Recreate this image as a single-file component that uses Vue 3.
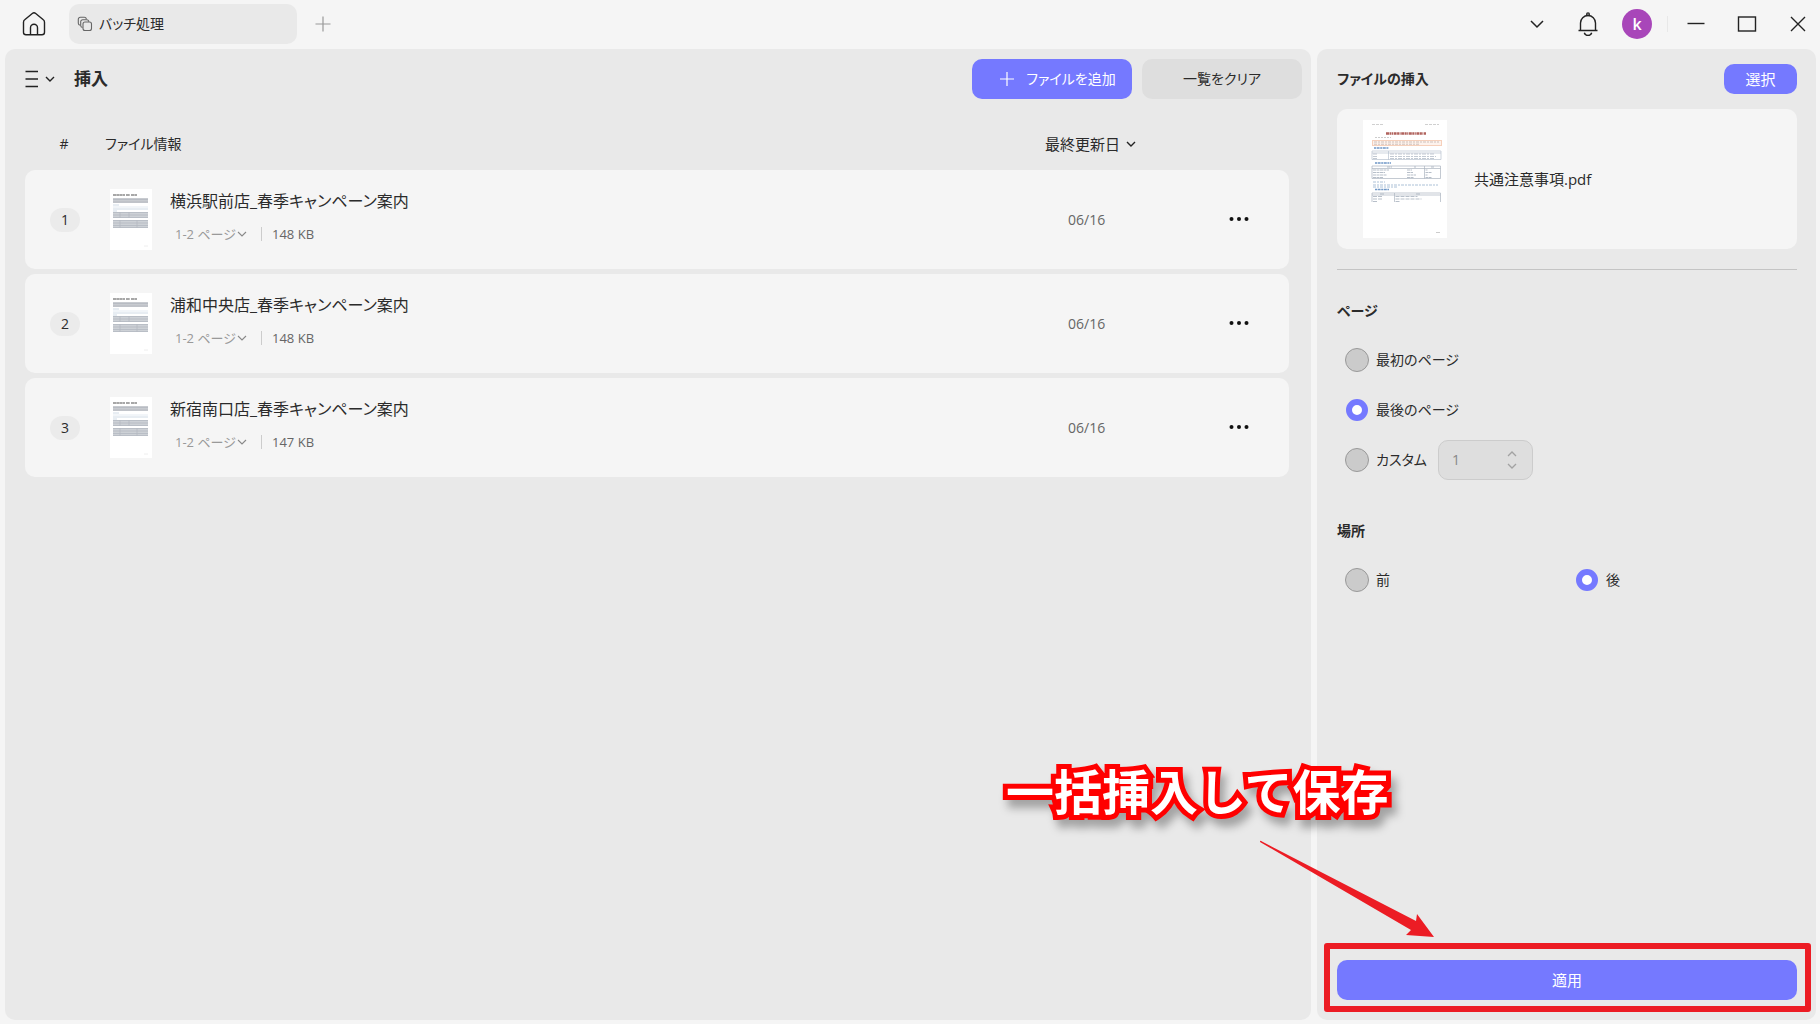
<script setup>
import { ref } from 'vue'

const files = ref([
  { id: 1, name: '横浜駅前店_春季キャンペーン案内', pages: '1-2 ページ', size: '148 KB', date: '06/16' },
  { id: 2, name: '浦和中央店_春季キャンペーン案内', pages: '1-2 ページ', size: '148 KB', date: '06/16' },
  { id: 3, name: '新宿南口店_春季キャンペーン案内', pages: '1-2 ページ', size: '147 KB', date: '06/16' },
])
const page = ref('last')
const place = ref('after')
const customPage = ref(1)
</script>

<template>
  <div class="app">
    <header class="titlebar">
      <button class="icon-btn home" aria-label="ホーム">
        <svg width="26" height="26" viewBox="0 0 26 26" fill="none" stroke="#222" stroke-width="1.4" stroke-linejoin="round">
          <path d="M2.5 11.2c0-1 .4-1.8 1.2-2.4L11.3 2.500c1-.8 2.400-.8 3.400 0l7.600 6.300c.8.600 1.200 1.400 1.200 2.400v10c0 1.500-1 2.500-2.500 2.500H5c-1.500 0-2.500-1-2.500-2.500z" />
          <path d="M9.500 23.700v-7a3.500 3.500 0 0 1 7 0v7" />
        </svg>
      </button>
      <button class="tab">
        <svg width="16" height="16" viewBox="0 0 16 16" fill="none" stroke="#666" stroke-width="1.1">
          <rect x="6" y="6" width="8.500" height="8.500" rx="2" />
          <path d="M5.500 11.500A2 2 0 0 1 3.700 9.500V5.700a2 2 0 0 1 2-2h4a2 2 0 0 1 2 2" />
          <path d="M3.200 9.200A2 2 0 0 1 1.300 7.200V3.300a2 2 0 0 1 2-2h4a2 2 0 0 1 2 2" />
        </svg>
        <span>バッチ処理</span>
      </button>
      <button class="icon-btn new-tab" aria-label="新しいタブ">
        <svg width="16" height="16" viewBox="0 0 16 16" stroke="#999" stroke-width="1.2"><path d="M8 0.500v15M0.500 8h15" /></svg>
      </button>
      <div class="window-tools">
        <button class="icon-btn" aria-label="メニュー">
          <svg width="16" height="16" viewBox="0 0 16 16" fill="none" stroke="#222" stroke-width="1.5"><path d="M2 5l6 6 6-6" /></svg>
        </button>
        <button class="icon-btn" aria-label="通知">
          <svg width="22" height="26" viewBox="0 0 22 26" fill="none" stroke="#222" stroke-width="1.4">
            <circle cx="11" cy="3.200" r="1.300" />
            <path d="M3.500 19.500v-7.500a7.500 7.500 0 0 1 15 0v7.500M1.500 19.500h19M7.300 21.700a3.900 3.900 0 0 0 7.400 0" />
          </svg>
        </button>
        <button class="avatar">k</button>
        <span class="separator"></span>
        <button class="icon-btn" aria-label="最小化">
          <svg width="18" height="18" viewBox="0 0 18 18" stroke="#222" stroke-width="1.4"><path d="M0.500 8.500h17" /></svg>
        </button>
        <button class="icon-btn" aria-label="最大化">
          <svg width="20" height="18" viewBox="0 0 20 18" fill="none" stroke="#222" stroke-width="1.4"><rect x="1.500" y="2" width="17" height="14" /></svg>
        </button>
        <button class="icon-btn" aria-label="閉じる">
          <svg width="18" height="18" viewBox="0 0 18 18" stroke="#222" stroke-width="1.4"><path d="M2 2l14 14M16 2L2 16" /></svg>
        </button>
      </div>
    </header>

    <div class="content">
      <main class="panel list-panel">
        <div class="toolbar">
          <button class="icon-btn view-menu" aria-label="表示">
            <svg width="14" height="18" viewBox="0 0 14 18" stroke="#222" stroke-width="1.3"><path d="M0.500 1.500h12.500M0.500 9h12.500M0.500 16.500h12.500" /></svg>
            <svg width="10" height="10" viewBox="0 0 10 10" fill="none" stroke="#222" stroke-width="1.4"><path d="M1 3l4 4 4-4" /></svg>
          </button>
          <h1>挿入</h1>
          <div class="actions">
            <button class="btn primary">
              <svg width="14" height="14" viewBox="0 0 14 14" stroke="#fff" stroke-width="1.2"><path d="M7 0v14M0 7h14" /></svg>
              <span>ファイルを追加</span>
            </button>
            <button class="btn">一覧をクリア</button>
          </div>
        </div>

        <table>
          <thead>
            <tr>
              <th class="col-number">#</th>
              <th class="col-info">ファイル情報</th>
              <th class="col-date">
                <button class="sort">最終更新日
                  <svg width="10" height="10" viewBox="0 0 10 10" fill="none" stroke="#222" stroke-width="1.4"><path d="M1 3l4 4 4-4" /></svg>
                </button>
              </th>
              <th class="col-more"></th>
            </tr>
          </thead>
          <tbody>
            <tr v-for="file in files" :key="file.id">
              <td class="col-number"><span class="badge">{{ file.id }}</span></td>
              <td>
                <div class="file">
                  <svg width="42" height="61" viewBox="0 0 42 61">
                    <rect width="42" height="61" fill="#fff" />
                    <path d="M3 6h12M16 6h4M21 6h6" stroke="#8a8a8a" stroke-width="1.4" stroke-dasharray="3 .3" />
                    <rect x="3" y="9" width="35" height="5" fill="#c8cbd0" />
                    <path d="M3 10.500h35M3 13h35" stroke="#b4b8bf" stroke-width=".8" />
                    <path d="M3 16h6M3 20h35M3 22h4" stroke="#d0dbe6" stroke-width="1" />
                    <path d="M3 18h35" stroke="#e4ebf2" stroke-width="1" />
                    <rect x="3" y="23" width="35" height="6" fill="#cdd1d6" />
                    <path d="M3 23.500h35M3 26h35M3 28.500h35M10 23v6M19 23v6" stroke="#b4b9c1" stroke-width=".8" />
                    <rect x="3" y="31" width="35" height="8" fill="#cdd1d6" />
                    <path d="M3 31.500h35M3 34h35M3 36.500h35M3 38.500h35M10 31v8M27 31v8" stroke="#b4b9c1" stroke-width=".8" />
                    <path d="M34 57h4" stroke="#eee" />
                  </svg>
                  <div>
                    <div class="file-name">{{ file.name }}</div>
                    <div class="file-meta">
                      <label class="pages">
                        <select aria-label="ページ範囲"><option>{{ file.pages }}</option></select>
                        <svg width="10" height="10" viewBox="0 0 10 10" fill="none" stroke="#888" stroke-width="1.1"><path d="M1 3l4 4 4-4" /></svg>
                      </label>
                      <span class="size">{{ file.size }}</span>
                    </div>
                  </div>
                </div>
              </td>
              <td class="date">{{ file.date }}</td>
              <td>
                <button class="icon-btn more" aria-label="その他">
                  <svg width="20" height="4" viewBox="0 0 20 4" fill="#111"><circle cx="2.500" cy="2" r="2" /><circle cx="10" cy="2" r="2" /><circle cx="17.500" cy="2" r="2" /></svg>
                </button>
              </td>
            </tr>
          </tbody>
        </table>
      </main>

      <aside class="panel side-panel">
        <div class="side-head">
          <h2>ファイルの挿入</h2>
          <button class="btn primary small">選択</button>
        </div>
        <div class="card">
          <svg width="84" height="118" viewBox="0 0 84 118">
            <rect width="84" height="118" fill="#fff" />
            <g fill="none">
              <path d="M9 4.500h12M62 4.500h14" stroke="#d0d0d0" stroke-dasharray="3 1" />
              <path d="M23 13.500h40" stroke="#b0625c" stroke-width="2.4" stroke-dasharray="3 .5 2 .5 1 .6" />
              <path d="M12 17.500h16" stroke="#ccc" stroke-dasharray="2 1" />
              <rect x="9.500" y="20.500" width="69" height="5" stroke="#f6d0bb" fill="#fdf2ec" />
              <path d="M11 22h65M11 24.200h46" stroke="#b9aca6" stroke-width=".7" stroke-dasharray="3 1 2 1" />
              <path d="M11 28h15M12 43h16M12 69.500h14" stroke="#6f97c6" stroke-width="1.4" stroke-dasharray="2 .6 3 .6" />
              <path d="M9 31h69v8.500H9zM25.500 31v9M9 33h69" stroke="#b8c2ce" stroke-width=".7" />
              <path d="M27 34h44M10 34h5M27 36.500h46M10 36.500h4M27 38.500h44M10 38.500h5" stroke="#a9b3c0" stroke-width=".7" stroke-dasharray="4 1 2 1" />
              <path d="M9 46h68.500v12.500H9zM61.500 46v12.500M9 48.500h68.500" stroke="#aab3be" stroke-width=".7" />
              <path d="M24 47h5M51 47h2M68 47h3M10 50h16M44 50h5M62.500 50h2M10 52.500h12M44 52.500h6M62.500 52.500h6M10 55h14M44 55h9M62.500 55h2M10 57.500h10M44 57.500h7M62.500 57.500h6" stroke="#a4aebb" stroke-width=".8" stroke-dasharray="3 .5" />
              <path d="M10 62h12M10 65h65M10 67h24" stroke="#a3bad3" stroke-width=".9" stroke-dasharray="3 1 2 1" />
              <path d="M9 73h68.500M9 75h68.500M9 73v9M31.500 73v9M77.500 73v9" stroke="#aab3be" stroke-width=".7" />
              <path d="M17 74h5M53 74h4M10 76.500h9M32.500 76.500h22M10 79h10M32.500 79h26M10 81.500h4M32.500 81.500h4" stroke="#a4aebb" stroke-width=".8" stroke-dasharray="4 1" />
              <path d="M73 112.500h4" stroke="#ccc" />
            </g>
          </svg>
          <span>共通注意事項.pdf</span>
        </div>
        <hr />
        <fieldset>
          <legend>ページ</legend>
          <label class="option"><input v-model="page" type="radio" name="page" value="first" />最初のページ</label>
          <label class="option"><input v-model="page" type="radio" name="page" value="last" />最後のページ</label>
          <div class="custom-row">
            <label class="option"><input v-model="page" type="radio" name="page" value="custom" />カスタム</label>
            <div class="spinner">
              <input v-model="customPage" type="number" aria-label="カスタムページ" disabled />
              <svg width="10" height="20" viewBox="0 0 10 20" fill="none" stroke="#a2a2a2" stroke-width="1.3"><path d="M1 6l4-4 4 4M1 14l4 4 4-4" /></svg>
            </div>
          </div>
        </fieldset>
        <fieldset>
          <legend>場所</legend>
          <div class="place-row">
            <label class="option"><input v-model="place" type="radio" name="place" value="before" />前</label>
            <label class="option"><input v-model="place" type="radio" name="place" value="after" />後</label>
          </div>
        </fieldset>
        <div class="apply">
          <button class="btn primary">適用</button>
          <div class="highlight"></div>
          <svg class="callout" width="460" height="184" viewBox="0 0 460 184">
            <text x="16" y="50">一括挿入して保存</text>
            <path d="M270 82Q270 80 272 81.500L426 161L427 154L444 177L416 175L421 170Z" fill="#ec1c24" />
          </svg>
        </div>
      </aside>
    </div>
  </div>
</template>

<style>
body {
  margin: 0;
  background: #f5f5f5;
}
</style>

<style scoped>
.app {
  display: flex;
  flex-direction: column;
  min-height: 100vh;
  box-sizing: border-box;
  padding: 0 4px 4px 5px;
  color: #2b2b2b;
  font-family: "Open Sans", "Noto Sans CJK JP", sans-serif;
  font-size: 14px;
  line-height: 20px;
  font-feature-settings: "palt";
}
.app * {
  box-sizing: border-box;
}
button,
input,
select {
  margin: 0;
  padding: 0;
  border: 0;
  background: none;
  color: inherit;
  font: inherit;
  font-feature-settings: "palt";
}
button {
  cursor: pointer;
}
svg {
  display: block;
  flex: none;
}
h1,
h2 {
  margin: 0;
  font-weight: 700;
}
.icon-btn {
  display: flex;
  align-items: center;
  justify-content: center;
}

.titlebar {
  display: flex;
  align-items: center;
  height: 49px;
  padding-bottom: 1px;
}
.home {
  margin-left: 16px;
}
.tab {
  display: flex;
  align-items: center;
  gap: 6px;
  width: 228px;
  height: 40px;
  margin-left: 22px;
  padding-left: 8px;
  border-radius: 10px;
  background: #e9e9e9;
}
.new-tab {
  margin-left: 18px;
}
.window-tools {
  display: flex;
  align-items: center;
  margin-left: auto;
  padding-right: 9px;
}
.window-tools > * {
  margin-left: 32px;
}
.window-tools .avatar {
  width: 30px;
  height: 30px;
  margin-left: 23px;
  border-radius: 50%;
  background: #a846b9;
  color: #fff;
  font-size: 16px;
  font-weight: 600;
  line-height: 28px;
}
.window-tools .separator {
  width: 1px;
  height: 16px;
  margin-left: 15px;
  background: #e8e8e8;
}
.window-tools .separator + .icon-btn {
  margin-left: 19px;
}

.content {
  display: flex;
  flex: 1;
  gap: 6px;
}
.panel {
  border-radius: 10px;
  background: #e9e9e9;
}
.list-panel {
  flex: 1;
  min-width: 0;
}
.toolbar {
  display: flex;
  align-items: center;
  padding: 10px 9px 0 20px;
}
.view-menu {
  gap: 6px;
}
h1 {
  margin-left: 19px;
  font-size: 17px;
}
.actions {
  display: flex;
  gap: 10px;
  margin-left: auto;
}
.btn {
  display: flex;
  align-items: center;
  justify-content: center;
  gap: 12px;
  width: 160px;
  height: 40px;
  border-radius: 10px;
  background: #dedede;
}
.primary {
  background: #7579ff;
  color: #fff;
}
.actions .primary {
  padding-left: 12px;
}

table {
  width: calc(100% - 42px);
  margin: 18px 22px 0 20px;
  border-spacing: 0 5px;
  table-layout: fixed;
}
th {
  height: 43px;
  padding: 0;
  font-weight: 400;
  text-align: left;
}
td {
  height: 99px;
  padding: 0;
  background: #f5f5f5;
}
td:first-child {
  border-radius: 10px 0 0 10px;
}
td:last-child {
  border-radius: 0 10px 10px 0;
}
.col-number {
  width: 80px;
  text-align: center;
}
th.col-number {
  padding-right: 2px;
}
.col-date {
  width: 184px;
}
.col-more {
  width: 60px;
}
.sort,
.small,
.card,
.apply .btn {
  font-size: 15px;
}
.sort {
  display: flex;
  align-items: center;
  gap: 6px;
}
.badge {
  display: inline-block;
  width: 30px;
  border-radius: 12px;
  background: #ebebeb;
  line-height: 24px;
}
.file {
  display: flex;
  align-items: center;
  gap: 18px;
  padding-left: 5px;
}
.file-name {
  font-size: 16px;
  line-height: 24px;
}
.file-meta {
  display: flex;
  align-items: center;
  margin-top: 11px;
  padding: 0 0 7px 5px;
  font-size: 13px;
}
.pages {
  display: flex;
  align-items: center;
  color: #999;
}
.pages select {
  appearance: none;
}
.size {
  margin-left: 14px;
  padding-left: 10px;
  border-left: 1px solid #ccc;
  color: #666;
  line-height: 14px;
}
.date {
  padding-left: 23px;
  color: #666;
}
.more {
  padding: 0 0 2px;
}

.side-panel {
  display: flex;
  flex: 0 0 499px;
  flex-direction: column;
  padding: 15px 19px 20px 20px;
}
.side-head {
  display: flex;
  align-items: center;
  justify-content: space-between;
}
h2,
legend {
  font-size: 14px;
  font-weight: 700;
}
.small {
  width: 73px;
  height: 30px;
}
.card {
  display: flex;
  align-items: center;
  gap: 27px;
  height: 140px;
  margin-top: 15px;
  padding-left: 26px;
  border-radius: 10px;
  background: #f5f5f5;
}
hr {
  width: 100%;
  height: 1px;
  margin: 20px 0 0;
  border: 0;
  background: #c4c4c4;
}
fieldset {
  min-width: 0;
  margin: 31px 0 0;
  padding: 0;
  border: 0;
}
fieldset + fieldset {
  margin-top: 36px;
}
legend {
  margin-bottom: 14px;
  padding: 0;
}
.option {
  display: flex;
  align-items: center;
  gap: 7px;
  height: 50px;
  padding-left: 8px;
}
.option input {
  appearance: none;
  width: 24px;
  height: 24px;
  border: 1px solid #999;
  border-radius: 50%;
  background: #cbcbcb;
}
.option input:checked {
  width: 22px;
  height: 22px;
  margin: 1px;
  border: 6px solid #7579ff;
  background: #fff;
}
.custom-row {
  display: flex;
  align-items: center;
  gap: 11px;
}
.spinner {
  display: flex;
  align-items: center;
  width: 95px;
  height: 40px;
  padding: 0 15px 0 13px;
  border: 1px solid #ccc;
  border-radius: 10px;
  background: #dedede;
  color: #888;
}
.spinner input {
  flex: 1;
  min-width: 0;
  appearance: textfield;
}
.place-row {
  display: grid;
  grid-template-columns: 1fr 1fr;
}
.apply {
  position: relative;
  margin-top: auto;
}
.apply .btn {
  width: 100%;
}
.highlight {
  position: absolute;
  inset: -17px -14px -12px -13px;
  border: 6px solid #ec1c24;
  border-radius: 3px;
  pointer-events: none;
}
.callout {
  position: absolute;
  right: 347px;
  bottom: 56px;
  overflow: visible;
  pointer-events: none;
}
.callout text {
  fill: #fff;
  stroke: #f00;
  stroke-width: 10px;
  stroke-linejoin: miter;
  stroke-miterlimit: 3;
  paint-order: stroke;
  font-family: "Noto Sans CJK JP", sans-serif;
  font-size: 48px;
  font-weight: 700;
  font-feature-settings: normal;
  filter: drop-shadow(5px 8px 4px rgba(0, 0, 0, 0.3));
}
</style>
